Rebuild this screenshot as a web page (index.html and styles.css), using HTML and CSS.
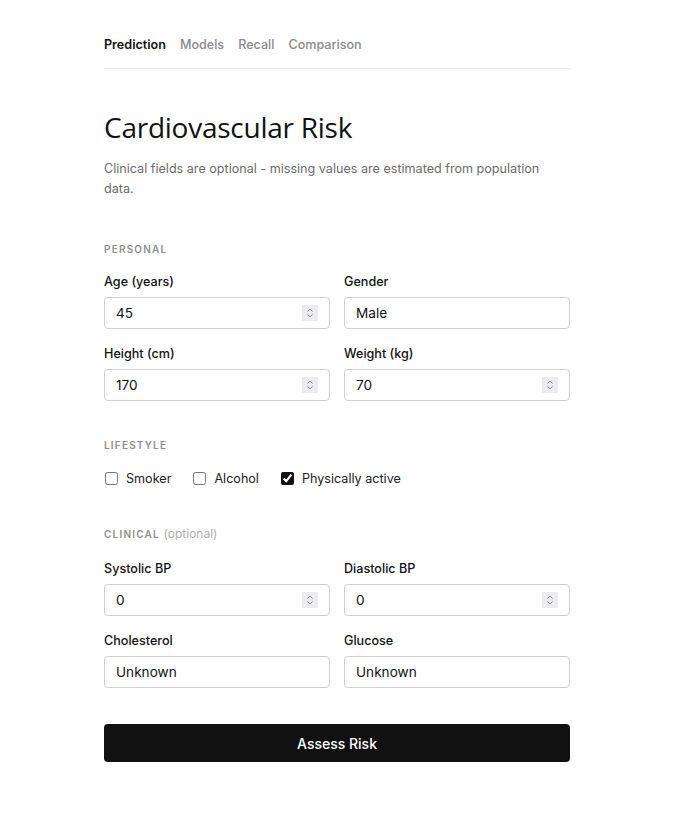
FILE: index.html
```html
<!DOCTYPE html>
<html lang="en">
<head>
<meta charset="utf-8">
<title>Cardiovascular Risk</title>
<link rel="stylesheet" href="styles.css">
</head>
<body>
<div class="page">
  <nav class="tabs">
    <a class="tab active">Prediction</a>
    <a class="tab">Models</a>
    <a class="tab">Recall</a>
    <a class="tab">Comparison</a>
  </nav>

  <h1 class="title">Cardiovascular Risk</h1>
  <p class="subtitle">Clinical fields are optional - missing values are estimated from population data.</p>

  <section class="section personal">
    <h2 class="section-title">PERSONAL</h2>
    <div class="grid">
      <label class="field"><span class="label">Age (years)</span>
        <span class="num"><input class="input" type="number" value="45"><span class="spin"><svg width="16" height="16" viewBox="0 0 16 16"><path d="M5.5 6.5 8 4.2l2.5 2.3M5.5 9.5 8 11.8l2.5-2.3" fill="none" stroke="#8a8a8a" stroke-width="1"/></svg></span></span>
      </label>
      <label class="field"><span class="label">Gender</span><input class="input" type="text" value="Male"></label>
      <label class="field"><span class="label">Height (cm)</span>
        <span class="num"><input class="input" type="number" value="170"><span class="spin"><svg width="16" height="16" viewBox="0 0 16 16"><path d="M5.5 6.5 8 4.2l2.5 2.3M5.5 9.5 8 11.8l2.5-2.3" fill="none" stroke="#8a8a8a" stroke-width="1"/></svg></span></span>
      </label>
      <label class="field"><span class="label">Weight (kg)</span>
        <span class="num"><input class="input" type="number" value="70"><span class="spin"><svg width="16" height="16" viewBox="0 0 16 16"><path d="M5.5 6.5 8 4.2l2.5 2.3M5.5 9.5 8 11.8l2.5-2.3" fill="none" stroke="#8a8a8a" stroke-width="1"/></svg></span></span>
      </label>
    </div>
  </section>

  <section class="section lifestyle">
    <h2 class="section-title">LIFESTYLE</h2>
    <div class="checks">
      <label class="check"><input type="checkbox"><span>Smoker</span></label>
      <label class="check"><input type="checkbox"><span>Alcohol</span></label>
      <label class="check"><input type="checkbox" checked><span>Physically active</span></label>
    </div>
  </section>

  <section class="section clinical">
    <h2 class="section-title">CLINICAL <span class="optional">(optional)</span></h2>
    <div class="grid">
      <label class="field"><span class="label">Systolic BP</span>
        <span class="num"><input class="input" type="number" value="0"><span class="spin"><svg width="16" height="16" viewBox="0 0 16 16"><path d="M5.5 6.5 8 4.2l2.5 2.3M5.5 9.5 8 11.8l2.5-2.3" fill="none" stroke="#8a8a8a" stroke-width="1"/></svg></span></span>
      </label>
      <label class="field"><span class="label">Diastolic BP</span>
        <span class="num"><input class="input" type="number" value="0"><span class="spin"><svg width="16" height="16" viewBox="0 0 16 16"><path d="M5.5 6.5 8 4.2l2.5 2.3M5.5 9.5 8 11.8l2.5-2.3" fill="none" stroke="#8a8a8a" stroke-width="1"/></svg></span></span>
      </label>
      <label class="field"><span class="label">Cholesterol</span><input class="input" type="text" value="Unknown"></label>
      <label class="field"><span class="label">Glucose</span><input class="input" type="text" value="Unknown"></label>
    </div>
  </section>

  <button class="submit" type="button">Assess Risk</button>
</div>
</body>
</html>
```
FILE: styles.css
```css
* { box-sizing: border-box; }
html, body { margin: 0; padding: 0; background: #fff; }
body {
  font-family: Inter, "Liberation Sans", sans-serif;
  color: #111;
}
.page {
  width: 466px;
  margin: 0 0 0 104px;
  padding-top: 35px;
}
.tabs {
  display: flex;
  gap: 14px;
  padding-bottom: 13px;
  border-bottom: 1px solid #e8e8e8;
}
.tab {
  font-size: 12.6px;
  line-height: 20px;
  color: #8a8a8a;
  font-weight: 500;
}
.tab.active { color: #111; font-weight: 600; }
.title {
  margin: 40px 0 14px;
  font-family: "Open Sans", "Noto Sans", sans-serif;
  font-weight: 400;
  font-size: 28px;
  line-height: 36px;
  letter-spacing: -0.25px;
}
.subtitle {
  margin: 0;
  font-size: 12.6px;
  line-height: 20px;
  color: #6b6b6b;
}
.section { margin-top: 42px; }
.lifestyle { margin-top: 36px; }
.clinical { margin-top: 38px; }
.section-title {
  margin: 0 0 14px;
  font-size: 10px;
  line-height: 16px;
  font-weight: 600;
  letter-spacing: 1.2px;
  color: #8f8f8f;
}
.clinical .section-title { margin-bottom: 16px; }
.optional {
  font-size: 12px;
  font-weight: 400;
  letter-spacing: 0;
  color: #b0b0b0;
}
.grid {
  display: grid;
  grid-template-columns: minmax(0, 1fr) minmax(0, 1fr);
  column-gap: 14px;
  row-gap: 14px;
}
.field { display: flex; flex-direction: column; min-width: 0; }
.label {
  font-size: 12.6px;
  line-height: 20px;
  font-weight: 500;
  padding-top: 1px;
  margin-bottom: 5px;
  color: #111;
}
.num { position: relative; display: block; }
.input {
  display: block;
  width: 100%;
  height: 32px;
  border: 1px solid #d0d0d0;
  border-radius: 4px;
  padding: 0 11px;
  font-family: Inter, "Liberation Sans", sans-serif;
  font-size: 13.6px;
  color: #111;
  background: #fff;
  -moz-appearance: textfield;
}
.input::-webkit-inner-spin-button,
.input::-webkit-outer-spin-button { -webkit-appearance: none; margin: 0; }
.spin {
  position: absolute;
  right: 12px;
  top: 8px;
  width: 16px;
  height: 16px;
  background: #ececf0;
  display: block;
}
.spin svg { display: block; }
.checks {
  display: flex;
  gap: 21px;
  margin-top: 15px;
  height: 20px;
  align-items: center;
}
.check {
  display: flex;
  align-items: center;
  gap: 8px;
  font-size: 12.6px;
  color: #222;
}
.check input {
  margin: 0 0 0 1px;
  width: 13px;
  height: 13px;
  accent-color: #111;
}
.submit {
  display: block;
  width: 100%;
  height: 38px;
  margin-top: 36px;
  border: 0;
  border-radius: 4px;
  background: #111;
  color: #fff;
  font-family: Inter, "Liberation Sans", sans-serif;
  font-size: 14px;
  font-weight: 500;
}
```
